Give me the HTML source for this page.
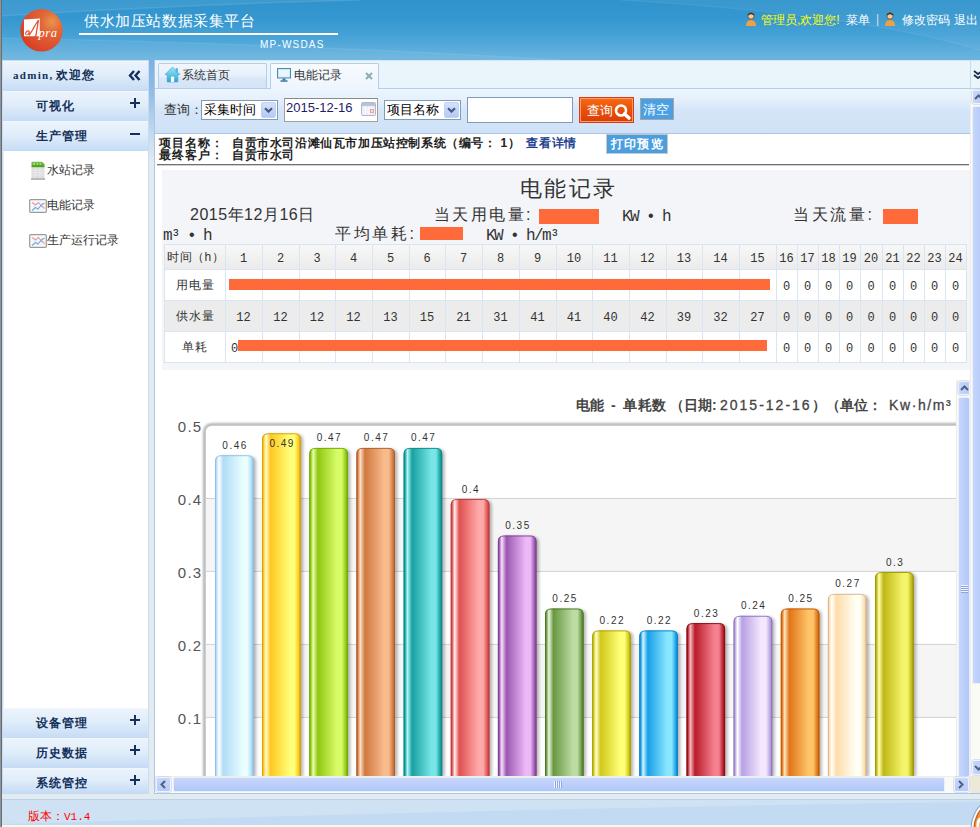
<!DOCTYPE html>
<html><head><meta charset="utf-8">
<style>
*{margin:0;padding:0;box-sizing:border-box}
html,body{width:980px;height:827px;overflow:hidden;background:#e3ebef;font-family:"Liberation Sans",sans-serif;font-size:12px;color:#333}
.a{position:absolute}
#hdr{left:0;top:0;width:980px;height:60px;background:linear-gradient(180deg,#2f93cc 0%,#3597cf 30%,#45a2d6 60%,#5eaedc 85%,#6ab5df 100%);overflow:hidden}
#lb{left:0;top:0;width:2px;height:827px;background:#8a94a8;border-right:1px solid #6e6e62;z-index:50}
.sw{border-radius:50%;background:rgba(255,255,255,0.08)}
.sbh{left:3px;width:145px;height:30px;background:linear-gradient(180deg,#ebf3fc 0%,#e0edfa 45%,#c5dbf5 100%);border-top:1px solid #f2f7fd}
.sbh b{position:absolute;top:6px;font-size:12px;color:#15305a;font-weight:bold;letter-spacing:1px}
.sbh .ic{position:absolute;left:127px;top:6px}
.it{left:28px;height:16px;font-size:12px;color:#333}
.tb{background:linear-gradient(180deg,#edf5fd 0%,#e6f1fc 22%,#d4e5f8 50%,#d0e2f7 100%)}
</style></head><body>
<div id="lb" class="a"></div>
<!-- header -->
<div id="hdr" class="a">
  <svg class="a" style="left:0;top:0" width="980" height="60" viewBox="0 0 980 60">
    <path d="M0 0 H360 Q200 4 0 16 Z" fill="#fff" opacity="0.07"/>
    <path d="M0 16 Q200 4 360 0" stroke="#fff" stroke-width="1.5" fill="none" opacity="0.10"/>
    <path d="M620 0 Q860 14 980 50 V0 Z" fill="#fff" opacity="0.05"/>
    <path d="M620 0 Q860 14 980 50" stroke="#fff" stroke-width="1.5" fill="none" opacity="0.06"/>
    <path d="M0 38 Q300 44 560 60 H0 Z" fill="#fff" opacity="0.06"/>
    <path d="M0 38 Q300 44 560 60" stroke="#fff" stroke-width="1.5" fill="none" opacity="0.08"/>
  </svg>
  <!-- logo -->
  <svg class="a" style="left:19px;top:8px" width="46" height="46" viewBox="0 0 46 46">
    <defs><radialGradient id="lg" cx="0.75" cy="0.3" r="0.85"><stop offset="0" stop-color="#ea954a"/><stop offset="0.3" stop-color="#e2673a"/><stop offset="0.75" stop-color="#dc4c2a"/><stop offset="1" stop-color="#d8381c"/></radialGradient></defs>
    <circle cx="22.5" cy="22.3" r="21.2" fill="url(#lg)"/>
    <path d="M5 11.6 L20.8 10.6 L20.8 28.2 L5 28.2 Z" fill="#fff"/>
    <path d="M6.5 26.5 Q7 22 10 23 Q11 26 7.5 27 M10 27.5 L13.5 22 Q16 17 19.5 12 M19.5 12 L17 27 M14 33 L17.5 26" stroke="#e2512c" stroke-width="1.3" fill="none"/>
    <text x="19.5" y="28.5" font-family="Liberation Serif" font-style="italic" font-size="12.5" fill="#fff" letter-spacing="0.6">pra</text>
  </svg>
  <div class="a" style="left:84px;top:12px;font-size:15px;color:#fff;letter-spacing:0.6px">供水加压站数据采集平台</div>
  <div class="a" style="left:79px;top:33px;width:259px;height:2px;background:#fff"></div>
  <div class="a" style="left:260px;top:39px;font-size:10px;color:#fff;letter-spacing:1.2px">MP-WSDAS</div>
  <!-- right links -->
  <div class="a" style="left:745px;top:12px;width:12px;height:14px">
    <svg width="12" height="14" viewBox="0 0 12 14"><circle cx="6" cy="4" r="3.2" fill="#f6c89a" stroke="#5a4030" stroke-width="0.8"/><path d="M1 14 Q1 8 6 8 Q11 8 11 14Z" fill="#f0a040"/><path d="M3 3 Q6 0 9 3" stroke="#333" stroke-width="1.4" fill="none"/></svg>
  </div>
  <div class="a" style="left:761px;top:12px;font-size:12px;color:#ffff00">管理员,欢迎您!</div>
  <div class="a" style="left:846px;top:12px;font-size:12px;color:#fff">菜单</div>
  <div class="a" style="left:876px;top:12px;font-size:12px;color:#dde">|</div>
  <div class="a" style="left:884px;top:12px;width:12px;height:14px">
    <svg width="12" height="14" viewBox="0 0 12 14"><circle cx="6" cy="4" r="3.2" fill="#f6c89a" stroke="#5a4030" stroke-width="0.8"/><path d="M1 14 Q1 8 6 8 Q11 8 11 14Z" fill="#f0a040"/><path d="M3 3 Q6 0 9 3" stroke="#333" stroke-width="1.4" fill="none"/></svg>
  </div>
  <div class="a" style="left:902px;top:12px;font-size:12px;color:#fff">修改密码</div>
  <div class="a" style="left:954px;top:12px;font-size:12px;color:#fff">退出</div>
</div>

<!-- sidebar -->
<div class="a" style="left:2px;top:60px;width:147px;height:734px;background:#fff;border:1px solid #c6dbf7;border-top:1px solid #c8daf0;box-shadow:inset 1px 0 0 #e2edfa"></div>
<div class="a sbh" style="top:61px"><b style="left:10px;font-size:12px;top:5px;letter-spacing:1px"><span style="font-family:'Liberation Serif',serif;font-size:11px;letter-spacing:1.3px;margin-right:2px">admin,</span>欢迎您</b><svg class="ic" style="left:125px;top:8px" width="13" height="11" viewBox="0 0 13 11"><path d="M6 1 L2 5.5 L6 10 M11.5 1 L7.5 5.5 L11.5 10" stroke="#15305a" stroke-width="2.4" fill="none"/></svg></div>
<div class="a sbh" style="top:91px"><b style="left:33px">可视化</b><svg class="ic" width="10" height="10" viewBox="0 0 10 10"><path d="M0 5H10M5 0V10" stroke="#15305a" stroke-width="2"/></svg></div>
<div class="a sbh" style="top:121px"><b style="left:33px">生产管理</b><svg class="ic" width="10" height="10" viewBox="0 0 10 10"><path d="M0 6H10" stroke="#15305a" stroke-width="2"/></svg></div>
<!-- items -->
<svg class="a" style="left:31px;top:161px" width="14" height="19" viewBox="0 0 14 19"><defs><linearGradient id="xg" x1="0" y1="0" x2="0" y2="1"><stop offset="0" stop-color="#7cc34a"/><stop offset="1" stop-color="#3f9a12"/></linearGradient></defs><path d="M0.5 1.5 Q0.5 0.8 1.2 0.8 H11 L13.5 3 V6.5 H0.5Z" fill="url(#xg)"/><rect x="0.5" y="6.5" width="13" height="11" fill="#dcdcdc"/><path d="M0.5 9H13.5M0.5 11.5H13.5M0.5 14H13.5M4.5 6.5V17.5M9 6.5V17.5" stroke="#ececec" stroke-width="0.8"/><rect x="0" y="17.3" width="14" height="1.5" fill="#a8a8a8"/><path d="M2 3H4M5.5 3H7M8.5 3H10" stroke="#e8f4e0" stroke-width="1.2"/></svg>
<div class="a it" style="left:47px;top:162px">水站记录</div>
<svg class="a" style="left:29px;top:199px" width="18" height="14" viewBox="0 0 18 14"><rect x="0.7" y="0.7" width="16.6" height="12.6" rx="1" fill="#fafafa" stroke="#9a9a9a" stroke-width="1.2"/><path d="M2 4.5H16M2 7.5H16M2 10.5H16M5 2V12M9 2V12M13 2V12" stroke="#ececec" stroke-width="0.6"/><path d="M3 3.5 L6.5 6 L9.5 3.5 L12 6.5 L15.5 9.5" stroke="#e99aa8" stroke-width="1.1" fill="none"/><path d="M3 11.5 L6.5 8.5 L9 10 L12.5 6 L15.5 4" stroke="#5cb0ee" stroke-width="1.1" fill="none"/></svg>
<div class="a it" style="left:47px;top:197px">电能记录</div>
<svg class="a" style="left:29px;top:234px" width="18" height="14" viewBox="0 0 18 14"><rect x="0.7" y="0.7" width="16.6" height="12.6" rx="1" fill="#fafafa" stroke="#9a9a9a" stroke-width="1.2"/><path d="M2 4.5H16M2 7.5H16M2 10.5H16M5 2V12M9 2V12M13 2V12" stroke="#ececec" stroke-width="0.6"/><path d="M3 3.5 L6.5 6 L9.5 3.5 L12 6.5 L15.5 9.5" stroke="#e99aa8" stroke-width="1.1" fill="none"/><path d="M3 11.5 L6.5 8.5 L9 10 L12.5 6 L15.5 4" stroke="#5cb0ee" stroke-width="1.1" fill="none"/></svg>
<div class="a it" style="left:47px;top:232px">生产运行记录</div>

<div class="a sbh" style="top:708px"><b style="left:33px">设备管理</b><svg class="ic" width="10" height="10" viewBox="0 0 10 10"><path d="M0 5H10M5 0V10" stroke="#15305a" stroke-width="2"/></svg></div>
<div class="a sbh" style="top:738px"><b style="left:33px">历史数据</b><svg class="ic" width="10" height="10" viewBox="0 0 10 10"><path d="M0 5H10M5 0V10" stroke="#15305a" stroke-width="2"/></svg></div>
<div class="a sbh" style="top:768px;height:25px"><b style="left:33px;top:6px">系统管控</b><svg class="ic" style="top:6px" width="10" height="10" viewBox="0 0 10 10"><path d="M0 5H10M5 0V10" stroke="#15305a" stroke-width="2"/></svg></div>

<!-- splitter -->
<div class="a" style="left:149px;top:60px;width:5px;height:734px;background:linear-gradient(180deg,#7db0e0 0%,#8fbbe4 4%,#c4daee 10%,#e3ebef 14%,#e3ebef 100%)"></div>

<!-- main panel -->
<div class="a" style="left:154px;top:60px;width:826px;height:734px;background:#fff;border-left:1px solid #a9c6e8;border-bottom:1px solid #a9c6e8"></div>
<!-- tab strip -->
<div class="a" style="left:155px;top:60px;width:825px;height:29px;background:#e9f4fb;border-top:1px solid #d4e6f6;border-bottom:1px solid #b6cfec"></div>
<div class="a" style="left:158px;top:63px;width:109px;height:25px;background:linear-gradient(180deg,#f0f6fd 0%,#e6f0fb 50%,#d9e7f8 60%,#d4e3f6 100%);border:1px solid #b4cdea;border-bottom:none;border-radius:2px 2px 0 0"></div>
<svg class="a" style="left:164px;top:66px" width="17" height="17" viewBox="0 0 16 16"><defs><linearGradient id="hg" x1="0" y1="0" x2="0" y2="1"><stop offset="0" stop-color="#9ee6f4"/><stop offset="1" stop-color="#2aa6d8"/></linearGradient></defs><path d="M8 1 L15 8 L13 8 L13 15 L3 15 L3 8 L1 8 Z" fill="url(#hg)" stroke="#3fa4c8" stroke-width="0.6"/><rect x="11" y="2" width="2" height="4" fill="#4ab8dc"/><rect x="6.5" y="10" width="3" height="5" fill="#fff"/></svg>
<div class="a" style="left:182px;top:67px;font-size:12px;color:#333">系统首页</div>
<div class="a" style="left:270px;top:63px;width:109px;height:26px;background:linear-gradient(180deg,#f7fbff,#eef5fd);border:1px solid #b4cdea;border-bottom:none;border-radius:2px 2px 0 0"></div>
<svg class="a" style="left:277px;top:68px" width="14" height="14" viewBox="0 0 14 14"><rect x="0.5" y="0.5" width="13" height="9.5" fill="#cfe8f4" stroke="#4a8cb0"/><rect x="2" y="2" width="10" height="6.5" fill="#e9f6fb"/><rect x="5.5" y="10.5" width="3" height="2" fill="#3a7aa0"/><rect x="3.5" y="12.3" width="7" height="1.5" fill="#3a7aa0"/></svg>
<div class="a" style="left:294px;top:67px;font-size:12px;color:#333">电能记录</div>
<svg class="a" style="left:365px;top:72px" width="8" height="8" viewBox="0 0 8 8"><path d="M1 1L7 7M7 1L1 7" stroke="#8cadb2" stroke-width="2"/></svg>
<div class="a" style="left:970px;top:61px;width:1px;height:27px;background:#c6daf2"></div>
<svg class="a" style="left:973px;top:69px" width="8" height="12" viewBox="0 0 8 12"><path d="M1 2 L5 5 L9 2 M1 6 L5 9 L9 6" stroke="#1a2c4c" stroke-width="1.8" fill="none"/></svg>
<!-- toolbar -->
<div class="a tb" style="left:155px;top:89px;width:816px;height:45px;border-bottom:1px solid #a9c6e8"></div>
<div class="a" style="left:164px;top:101px;font-size:13px;color:#333">查询：</div>
<div class="a" style="left:201px;top:100px;width:77px;height:20px;background:#fff;border:1px solid #7f9db9"></div>
<div class="a" style="left:204px;top:101px;font-size:13px;color:#000">采集时间</div>
<div class="a" style="left:261px;top:102px;width:15px;height:16px;border-radius:2px;background:linear-gradient(180deg,#d5e1fb,#b3c9f4);border:1px solid #c4d2f0"></div>
<svg class="a" style="left:264px;top:107px" width="9" height="6" viewBox="0 0 9 6"><path d="M1 1.2 L4.5 4.6 L8 1.2" stroke="#46597e" stroke-width="2.2" fill="none"/></svg>
<div class="a" style="left:284px;top:98px;width:94px;height:24px;background:#fff;border:1px solid #a0a0a0;border-top-color:#8a8a8a"></div>
<div class="a" style="left:286px;top:100px;font-size:13px;color:#1c1c6a">2015-12-16</div>
<svg class="a" style="left:361px;top:102px" width="15" height="14" viewBox="0 0 15 14"><rect x="0.5" y="0.5" width="14" height="13" rx="1" fill="#e8ecf4" stroke="#b0b8c8"/><rect x="1" y="1" width="13" height="3" fill="#b4c4dc"/><path d="M1 7 H14 M1 10 H14 M4.5 4 V13 M8 4 V13 M11 4 V13" stroke="#fafcff" stroke-width="0.9"/><rect x="9" y="7" width="4" height="4" fill="#f0a090"/><rect x="10.2" y="8.2" width="1.6" height="1.6" fill="#fff"/></svg>
<div class="a" style="left:384px;top:100px;width:77px;height:20px;background:#fff;border:1px solid #7f9db9"></div>
<div class="a" style="left:387px;top:101px;font-size:13px;color:#000">项目名称</div>
<div class="a" style="left:444px;top:102px;width:15px;height:16px;border-radius:2px;background:linear-gradient(180deg,#d5e1fb,#b3c9f4);border:1px solid #c4d2f0"></div>
<svg class="a" style="left:447px;top:107px" width="9" height="6" viewBox="0 0 9 6"><path d="M1 1.2 L4.5 4.6 L8 1.2" stroke="#46597e" stroke-width="2.2" fill="none"/></svg>
<div class="a" style="left:467px;top:97px;width:106px;height:26px;background:#fff;border:1px solid #7f9db9"></div>
<div class="a" style="left:579px;top:97px;width:55px;height:26px;background:linear-gradient(180deg,#f86a12,#e8500a 50%,#dc3c08);border:1px solid #d83a1a;box-shadow:inset 0 0 0 1px #f7a066"></div>
<div class="a" style="left:587px;top:102px;font-size:13px;color:#fff">查询</div>
<svg class="a" style="left:614px;top:104px" width="18" height="16" viewBox="0 0 18 16"><circle cx="7" cy="6.5" r="5" stroke="#fff" stroke-width="2.6" fill="none"/><path d="M10.5 10 L15 14" stroke="#fff" stroke-width="3.6" stroke-linecap="round"/></svg>
<div class="a" style="left:640px;top:98px;width:34px;height:22px;background:#4aa0e2;border:1px solid #a4a4a4"></div>
<div class="a" style="left:643px;top:101px;font-size:13px;color:#fff">清空</div>
<!-- info -->
<div class="a" style="left:159px;top:137px;font-size:12px;font-weight:bold;color:#222;line-height:12px;letter-spacing:1px">项目名称：<br>最终客户：</div>
<div class="a" style="left:232px;top:137px;font-size:12px;font-weight:bold;color:#222;line-height:12px;letter-spacing:0.6px;white-space:nowrap">自贡市水司沿滩仙瓦市加压站控制系统（编号： 1）<span style="color:#1d3f8f;margin-left:6px">查看详情</span><br>自贡市水司</div>
<div class="a" style="left:606px;top:134px;width:62px;height:20px;background:#4a9fe0;border:1px solid #c8c8c8"></div>
<div class="a" style="left:611px;top:136px;font-size:12px;font-weight:bold;color:#fff;letter-spacing:1.2px">打印预览</div>
<div class="a" style="left:157px;top:164px;width:812px;height:1px;background:#707070"></div>
<div class="a" style="left:157px;top:165px;width:812px;height:1px;background:#d0d0d0"></div>
<!-- report panel -->
<div class="a" style="left:162px;top:170px;width:809px;height:200px;background:#f4f5f8"></div>
<div class="a" style="left:520px;top:174px;font-size:22px;color:#333;letter-spacing:2.3px">电能记录</div>
<div class="a" style="left:190px;top:205px;font-size:16px;color:#333;letter-spacing:0.5px">2015年12月16日</div>
<div class="a" style="left:434px;top:205px;font-size:16px;color:#333;letter-spacing:2.4px">当天用电量:</div>
<div class="a" style="left:539px;top:209px;width:60px;height:15px;background:#fe6a3a"></div>
<div class="a" style="left:622px;top:208px;font-size:16px;color:#333;font-family:'Liberation Mono',monospace;letter-spacing:-1.6px">KW • h</div>
<div class="a" style="left:793px;top:205px;font-size:16px;color:#333;letter-spacing:2.6px">当天流量:</div>
<div class="a" style="left:883px;top:209px;width:35px;height:15px;background:#fe6a3a"></div>
<div class="a" style="left:163px;top:227px;font-size:16px;color:#333;font-family:'Liberation Mono',monospace;letter-spacing:-1.6px">m³ • h</div>
<div class="a" style="left:335px;top:224px;font-size:16px;color:#333;letter-spacing:2.6px">平均单耗:</div>
<div class="a" style="left:420px;top:227px;width:43px;height:13px;background:#fe6a3a"></div>
<div class="a" style="left:486px;top:227px;font-size:16px;color:#333;font-family:'Liberation Mono',monospace;letter-spacing:-1.6px">KW • h/m³</div>
<div class="a" style="left:164px;top:244px;width:803px;height:25px;background:linear-gradient(180deg,#f8f8f8,#ebebeb)"></div>
<div class="a" style="left:164px;top:269px;width:803px;height:31px;background:#fff"></div>
<div class="a" style="left:164px;top:300px;width:803px;height:31px;background:#ececec"></div>
<div class="a" style="left:164px;top:331px;width:803px;height:31px;background:#fff"></div>
<div class="a" style="left:164px;top:244px;width:803px;height:1px;background:#d9e5f2"></div>
<div class="a" style="left:164px;top:269px;width:803px;height:1px;background:#d9e5f2"></div>
<div class="a" style="left:164px;top:300px;width:803px;height:1px;background:#d9e5f2"></div>
<div class="a" style="left:164px;top:331px;width:803px;height:1px;background:#d9e5f2"></div>
<div class="a" style="left:164px;top:362px;width:803px;height:1px;background:#d9e5f2"></div>
<div class="a" style="left:164px;top:244px;width:1px;height:119px;background:#d9e5f2"></div>
<div class="a" style="left:225px;top:244px;width:1px;height:119px;background:#d9e5f2"></div>
<div class="a" style="left:262px;top:244px;width:1px;height:119px;background:#d9e5f2"></div>
<div class="a" style="left:299px;top:244px;width:1px;height:119px;background:#d9e5f2"></div>
<div class="a" style="left:335px;top:244px;width:1px;height:119px;background:#d9e5f2"></div>
<div class="a" style="left:372px;top:244px;width:1px;height:119px;background:#d9e5f2"></div>
<div class="a" style="left:409px;top:244px;width:1px;height:119px;background:#d9e5f2"></div>
<div class="a" style="left:445px;top:244px;width:1px;height:119px;background:#d9e5f2"></div>
<div class="a" style="left:482px;top:244px;width:1px;height:119px;background:#d9e5f2"></div>
<div class="a" style="left:519px;top:244px;width:1px;height:119px;background:#d9e5f2"></div>
<div class="a" style="left:556px;top:244px;width:1px;height:119px;background:#d9e5f2"></div>
<div class="a" style="left:592px;top:244px;width:1px;height:119px;background:#d9e5f2"></div>
<div class="a" style="left:629px;top:244px;width:1px;height:119px;background:#d9e5f2"></div>
<div class="a" style="left:666px;top:244px;width:1px;height:119px;background:#d9e5f2"></div>
<div class="a" style="left:702px;top:244px;width:1px;height:119px;background:#d9e5f2"></div>
<div class="a" style="left:739px;top:244px;width:1px;height:119px;background:#d9e5f2"></div>
<div class="a" style="left:776px;top:244px;width:1px;height:119px;background:#d9e5f2"></div>
<div class="a" style="left:797px;top:244px;width:1px;height:119px;background:#d9e5f2"></div>
<div class="a" style="left:818px;top:244px;width:1px;height:119px;background:#d9e5f2"></div>
<div class="a" style="left:839px;top:244px;width:1px;height:119px;background:#d9e5f2"></div>
<div class="a" style="left:860px;top:244px;width:1px;height:119px;background:#d9e5f2"></div>
<div class="a" style="left:882px;top:244px;width:1px;height:119px;background:#d9e5f2"></div>
<div class="a" style="left:903px;top:244px;width:1px;height:119px;background:#d9e5f2"></div>
<div class="a" style="left:924px;top:244px;width:1px;height:119px;background:#d9e5f2"></div>
<div class="a" style="left:945px;top:244px;width:1px;height:119px;background:#d9e5f2"></div>
<div class="a" style="left:966px;top:244px;width:1px;height:119px;background:#d9e5f2"></div>
<div class="a" style="left:164px;top:244px;width:61px;height:25px;line-height:25px;text-align:left;padding-left:3px;padding-top:1px;font-size:12px;color:#333;letter-spacing:0.5px">时间（h）</div>
<div class="a" style="left:164px;top:269px;width:61px;height:31px;line-height:31px;text-align:center;font-size:12px;color:#333;letter-spacing:1px;padding-left:1px;padding-top:1px">用电量</div>
<div class="a" style="left:164px;top:300px;width:61px;height:31px;line-height:31px;text-align:center;font-size:12px;color:#333;letter-spacing:1px;padding-left:1px;padding-top:1px">供水量</div>
<div class="a" style="left:164px;top:331px;width:61px;height:31px;line-height:31px;text-align:center;font-size:12px;color:#333;letter-spacing:1px;padding-left:1px;padding-top:1px">单耗</div>
<div class="a" style="left:225px;top:244px;width:37px;height:25px;line-height:25px;text-align:center;font-size:12px;color:#333;font-family:'Liberation Mono',monospace;padding-top:3px">1</div>
<div class="a" style="left:262px;top:244px;width:37px;height:25px;line-height:25px;text-align:center;font-size:12px;color:#333;font-family:'Liberation Mono',monospace;padding-top:3px">2</div>
<div class="a" style="left:299px;top:244px;width:36px;height:25px;line-height:25px;text-align:center;font-size:12px;color:#333;font-family:'Liberation Mono',monospace;padding-top:3px">3</div>
<div class="a" style="left:335px;top:244px;width:37px;height:25px;line-height:25px;text-align:center;font-size:12px;color:#333;font-family:'Liberation Mono',monospace;padding-top:3px">4</div>
<div class="a" style="left:372px;top:244px;width:37px;height:25px;line-height:25px;text-align:center;font-size:12px;color:#333;font-family:'Liberation Mono',monospace;padding-top:3px">5</div>
<div class="a" style="left:409px;top:244px;width:36px;height:25px;line-height:25px;text-align:center;font-size:12px;color:#333;font-family:'Liberation Mono',monospace;padding-top:3px">6</div>
<div class="a" style="left:445px;top:244px;width:37px;height:25px;line-height:25px;text-align:center;font-size:12px;color:#333;font-family:'Liberation Mono',monospace;padding-top:3px">7</div>
<div class="a" style="left:482px;top:244px;width:37px;height:25px;line-height:25px;text-align:center;font-size:12px;color:#333;font-family:'Liberation Mono',monospace;padding-top:3px">8</div>
<div class="a" style="left:519px;top:244px;width:37px;height:25px;line-height:25px;text-align:center;font-size:12px;color:#333;font-family:'Liberation Mono',monospace;padding-top:3px">9</div>
<div class="a" style="left:556px;top:244px;width:36px;height:25px;line-height:25px;text-align:center;font-size:12px;color:#333;font-family:'Liberation Mono',monospace;padding-top:3px">10</div>
<div class="a" style="left:592px;top:244px;width:37px;height:25px;line-height:25px;text-align:center;font-size:12px;color:#333;font-family:'Liberation Mono',monospace;padding-top:3px">11</div>
<div class="a" style="left:629px;top:244px;width:37px;height:25px;line-height:25px;text-align:center;font-size:12px;color:#333;font-family:'Liberation Mono',monospace;padding-top:3px">12</div>
<div class="a" style="left:666px;top:244px;width:36px;height:25px;line-height:25px;text-align:center;font-size:12px;color:#333;font-family:'Liberation Mono',monospace;padding-top:3px">13</div>
<div class="a" style="left:702px;top:244px;width:37px;height:25px;line-height:25px;text-align:center;font-size:12px;color:#333;font-family:'Liberation Mono',monospace;padding-top:3px">14</div>
<div class="a" style="left:739px;top:244px;width:37px;height:25px;line-height:25px;text-align:center;font-size:12px;color:#333;font-family:'Liberation Mono',monospace;padding-top:3px">15</div>
<div class="a" style="left:776px;top:244px;width:21px;height:25px;line-height:25px;text-align:center;font-size:12px;color:#333;font-family:'Liberation Mono',monospace;padding-top:3px">16</div>
<div class="a" style="left:797px;top:244px;width:21px;height:25px;line-height:25px;text-align:center;font-size:12px;color:#333;font-family:'Liberation Mono',monospace;padding-top:3px">17</div>
<div class="a" style="left:818px;top:244px;width:21px;height:25px;line-height:25px;text-align:center;font-size:12px;color:#333;font-family:'Liberation Mono',monospace;padding-top:3px">18</div>
<div class="a" style="left:839px;top:244px;width:21px;height:25px;line-height:25px;text-align:center;font-size:12px;color:#333;font-family:'Liberation Mono',monospace;padding-top:3px">19</div>
<div class="a" style="left:860px;top:244px;width:22px;height:25px;line-height:25px;text-align:center;font-size:12px;color:#333;font-family:'Liberation Mono',monospace;padding-top:3px">20</div>
<div class="a" style="left:882px;top:244px;width:21px;height:25px;line-height:25px;text-align:center;font-size:12px;color:#333;font-family:'Liberation Mono',monospace;padding-top:3px">21</div>
<div class="a" style="left:903px;top:244px;width:21px;height:25px;line-height:25px;text-align:center;font-size:12px;color:#333;font-family:'Liberation Mono',monospace;padding-top:3px">22</div>
<div class="a" style="left:924px;top:244px;width:21px;height:25px;line-height:25px;text-align:center;font-size:12px;color:#333;font-family:'Liberation Mono',monospace;padding-top:3px">23</div>
<div class="a" style="left:945px;top:244px;width:21px;height:25px;line-height:25px;text-align:center;font-size:12px;color:#333;font-family:'Liberation Mono',monospace;padding-top:3px">24</div>
<div class="a" style="left:225px;top:300px;width:37px;height:31px;line-height:31px;text-align:center;font-size:12px;color:#333;font-family:'Liberation Mono',monospace;padding-top:3px">12</div>
<div class="a" style="left:262px;top:300px;width:37px;height:31px;line-height:31px;text-align:center;font-size:12px;color:#333;font-family:'Liberation Mono',monospace;padding-top:3px">12</div>
<div class="a" style="left:299px;top:300px;width:36px;height:31px;line-height:31px;text-align:center;font-size:12px;color:#333;font-family:'Liberation Mono',monospace;padding-top:3px">12</div>
<div class="a" style="left:335px;top:300px;width:37px;height:31px;line-height:31px;text-align:center;font-size:12px;color:#333;font-family:'Liberation Mono',monospace;padding-top:3px">12</div>
<div class="a" style="left:372px;top:300px;width:37px;height:31px;line-height:31px;text-align:center;font-size:12px;color:#333;font-family:'Liberation Mono',monospace;padding-top:3px">13</div>
<div class="a" style="left:409px;top:300px;width:36px;height:31px;line-height:31px;text-align:center;font-size:12px;color:#333;font-family:'Liberation Mono',monospace;padding-top:3px">15</div>
<div class="a" style="left:445px;top:300px;width:37px;height:31px;line-height:31px;text-align:center;font-size:12px;color:#333;font-family:'Liberation Mono',monospace;padding-top:3px">21</div>
<div class="a" style="left:482px;top:300px;width:37px;height:31px;line-height:31px;text-align:center;font-size:12px;color:#333;font-family:'Liberation Mono',monospace;padding-top:3px">31</div>
<div class="a" style="left:519px;top:300px;width:37px;height:31px;line-height:31px;text-align:center;font-size:12px;color:#333;font-family:'Liberation Mono',monospace;padding-top:3px">41</div>
<div class="a" style="left:556px;top:300px;width:36px;height:31px;line-height:31px;text-align:center;font-size:12px;color:#333;font-family:'Liberation Mono',monospace;padding-top:3px">41</div>
<div class="a" style="left:592px;top:300px;width:37px;height:31px;line-height:31px;text-align:center;font-size:12px;color:#333;font-family:'Liberation Mono',monospace;padding-top:3px">40</div>
<div class="a" style="left:629px;top:300px;width:37px;height:31px;line-height:31px;text-align:center;font-size:12px;color:#333;font-family:'Liberation Mono',monospace;padding-top:3px">42</div>
<div class="a" style="left:666px;top:300px;width:36px;height:31px;line-height:31px;text-align:center;font-size:12px;color:#333;font-family:'Liberation Mono',monospace;padding-top:3px">39</div>
<div class="a" style="left:702px;top:300px;width:37px;height:31px;line-height:31px;text-align:center;font-size:12px;color:#333;font-family:'Liberation Mono',monospace;padding-top:3px">32</div>
<div class="a" style="left:739px;top:300px;width:37px;height:31px;line-height:31px;text-align:center;font-size:12px;color:#333;font-family:'Liberation Mono',monospace;padding-top:3px">27</div>
<div class="a" style="left:776px;top:300px;width:21px;height:31px;line-height:31px;text-align:center;font-size:12px;color:#333;font-family:'Liberation Mono',monospace;padding-top:3px">0</div>
<div class="a" style="left:776px;top:269px;width:21px;height:31px;line-height:31px;text-align:center;font-size:12px;color:#333;font-family:'Liberation Mono',monospace;padding-top:3px">0</div>
<div class="a" style="left:776px;top:331px;width:21px;height:31px;line-height:31px;text-align:center;font-size:12px;color:#333;font-family:'Liberation Mono',monospace;padding-top:3px">0</div>
<div class="a" style="left:797px;top:300px;width:21px;height:31px;line-height:31px;text-align:center;font-size:12px;color:#333;font-family:'Liberation Mono',monospace;padding-top:3px">0</div>
<div class="a" style="left:797px;top:269px;width:21px;height:31px;line-height:31px;text-align:center;font-size:12px;color:#333;font-family:'Liberation Mono',monospace;padding-top:3px">0</div>
<div class="a" style="left:797px;top:331px;width:21px;height:31px;line-height:31px;text-align:center;font-size:12px;color:#333;font-family:'Liberation Mono',monospace;padding-top:3px">0</div>
<div class="a" style="left:818px;top:300px;width:21px;height:31px;line-height:31px;text-align:center;font-size:12px;color:#333;font-family:'Liberation Mono',monospace;padding-top:3px">0</div>
<div class="a" style="left:818px;top:269px;width:21px;height:31px;line-height:31px;text-align:center;font-size:12px;color:#333;font-family:'Liberation Mono',monospace;padding-top:3px">0</div>
<div class="a" style="left:818px;top:331px;width:21px;height:31px;line-height:31px;text-align:center;font-size:12px;color:#333;font-family:'Liberation Mono',monospace;padding-top:3px">0</div>
<div class="a" style="left:839px;top:300px;width:21px;height:31px;line-height:31px;text-align:center;font-size:12px;color:#333;font-family:'Liberation Mono',monospace;padding-top:3px">0</div>
<div class="a" style="left:839px;top:269px;width:21px;height:31px;line-height:31px;text-align:center;font-size:12px;color:#333;font-family:'Liberation Mono',monospace;padding-top:3px">0</div>
<div class="a" style="left:839px;top:331px;width:21px;height:31px;line-height:31px;text-align:center;font-size:12px;color:#333;font-family:'Liberation Mono',monospace;padding-top:3px">0</div>
<div class="a" style="left:860px;top:300px;width:22px;height:31px;line-height:31px;text-align:center;font-size:12px;color:#333;font-family:'Liberation Mono',monospace;padding-top:3px">0</div>
<div class="a" style="left:860px;top:269px;width:22px;height:31px;line-height:31px;text-align:center;font-size:12px;color:#333;font-family:'Liberation Mono',monospace;padding-top:3px">0</div>
<div class="a" style="left:860px;top:331px;width:22px;height:31px;line-height:31px;text-align:center;font-size:12px;color:#333;font-family:'Liberation Mono',monospace;padding-top:3px">0</div>
<div class="a" style="left:882px;top:300px;width:21px;height:31px;line-height:31px;text-align:center;font-size:12px;color:#333;font-family:'Liberation Mono',monospace;padding-top:3px">0</div>
<div class="a" style="left:882px;top:269px;width:21px;height:31px;line-height:31px;text-align:center;font-size:12px;color:#333;font-family:'Liberation Mono',monospace;padding-top:3px">0</div>
<div class="a" style="left:882px;top:331px;width:21px;height:31px;line-height:31px;text-align:center;font-size:12px;color:#333;font-family:'Liberation Mono',monospace;padding-top:3px">0</div>
<div class="a" style="left:903px;top:300px;width:21px;height:31px;line-height:31px;text-align:center;font-size:12px;color:#333;font-family:'Liberation Mono',monospace;padding-top:3px">0</div>
<div class="a" style="left:903px;top:269px;width:21px;height:31px;line-height:31px;text-align:center;font-size:12px;color:#333;font-family:'Liberation Mono',monospace;padding-top:3px">0</div>
<div class="a" style="left:903px;top:331px;width:21px;height:31px;line-height:31px;text-align:center;font-size:12px;color:#333;font-family:'Liberation Mono',monospace;padding-top:3px">0</div>
<div class="a" style="left:924px;top:300px;width:21px;height:31px;line-height:31px;text-align:center;font-size:12px;color:#333;font-family:'Liberation Mono',monospace;padding-top:3px">0</div>
<div class="a" style="left:924px;top:269px;width:21px;height:31px;line-height:31px;text-align:center;font-size:12px;color:#333;font-family:'Liberation Mono',monospace;padding-top:3px">0</div>
<div class="a" style="left:924px;top:331px;width:21px;height:31px;line-height:31px;text-align:center;font-size:12px;color:#333;font-family:'Liberation Mono',monospace;padding-top:3px">0</div>
<div class="a" style="left:945px;top:300px;width:21px;height:31px;line-height:31px;text-align:center;font-size:12px;color:#333;font-family:'Liberation Mono',monospace;padding-top:3px">0</div>
<div class="a" style="left:945px;top:269px;width:21px;height:31px;line-height:31px;text-align:center;font-size:12px;color:#333;font-family:'Liberation Mono',monospace;padding-top:3px">0</div>
<div class="a" style="left:945px;top:331px;width:21px;height:31px;line-height:31px;text-align:center;font-size:12px;color:#333;font-family:'Liberation Mono',monospace;padding-top:3px">0</div>
<div class="a" style="left:229px;top:279px;width:541px;height:11px;background:#fe6a3a"></div>
<div class="a" style="left:231px;top:343px;font-size:12px;line-height:12px;color:#333;font-family:'Liberation Mono',monospace">0</div>
<div class="a" style="left:238px;top:340px;width:529px;height:11px;background:#fe6a3a"></div>
<!-- chart -->
<svg class="a" style="left:155px;top:370px" width="815" height="406" viewBox="0 0 815 406">
<defs>
<linearGradient id="b0" x1="0" y1="0" x2="1" y2="0"><stop offset="0" stop-color="#8cc0e8"/><stop offset="0.035" stop-color="#b0dcf6"/><stop offset="0.1" stop-color="#ffffff"/><stop offset="0.22" stop-color="#b0dcf6"/><stop offset="0.72" stop-color="#e8feff"/><stop offset="0.84" stop-color="#e8feff"/><stop offset="0.95" stop-color="#b0dcf6"/><stop offset="1" stop-color="#8cc0e8"/></linearGradient>
<linearGradient id="b1" x1="0" y1="0" x2="1" y2="0"><stop offset="0" stop-color="#d4a000"/><stop offset="0.035" stop-color="#ffc820"/><stop offset="0.1" stop-color="#fffbd0"/><stop offset="0.22" stop-color="#ffc820"/><stop offset="0.72" stop-color="#ffff78"/><stop offset="0.84" stop-color="#ffff78"/><stop offset="0.95" stop-color="#ffc820"/><stop offset="1" stop-color="#d4a000"/></linearGradient>
<linearGradient id="b2" x1="0" y1="0" x2="1" y2="0"><stop offset="0" stop-color="#70a800"/><stop offset="0.035" stop-color="#90c810"/><stop offset="0.1" stop-color="#e8ffb0"/><stop offset="0.22" stop-color="#90c810"/><stop offset="0.72" stop-color="#d8fc68"/><stop offset="0.84" stop-color="#d8fc68"/><stop offset="0.95" stop-color="#90c810"/><stop offset="1" stop-color="#70a800"/></linearGradient>
<linearGradient id="b3" x1="0" y1="0" x2="1" y2="0"><stop offset="0" stop-color="#b05c2a"/><stop offset="0.035" stop-color="#d07840"/><stop offset="0.1" stop-color="#ffe0c8"/><stop offset="0.22" stop-color="#d07840"/><stop offset="0.72" stop-color="#f8bc8c"/><stop offset="0.84" stop-color="#f8bc8c"/><stop offset="0.95" stop-color="#d07840"/><stop offset="1" stop-color="#b05c2a"/></linearGradient>
<linearGradient id="b4" x1="0" y1="0" x2="1" y2="0"><stop offset="0" stop-color="#0a8888"/><stop offset="0.035" stop-color="#18a0a0"/><stop offset="0.1" stop-color="#b0f8f8"/><stop offset="0.22" stop-color="#18a0a0"/><stop offset="0.72" stop-color="#78e6e6"/><stop offset="0.84" stop-color="#78e6e6"/><stop offset="0.95" stop-color="#18a0a0"/><stop offset="1" stop-color="#0a8888"/></linearGradient>
<linearGradient id="b5" x1="0" y1="0" x2="1" y2="0"><stop offset="0" stop-color="#c03838"/><stop offset="0.035" stop-color="#e05050"/><stop offset="0.1" stop-color="#fff0f0"/><stop offset="0.22" stop-color="#e05050"/><stop offset="0.72" stop-color="#ffaaaa"/><stop offset="0.84" stop-color="#ffaaaa"/><stop offset="0.95" stop-color="#e05050"/><stop offset="1" stop-color="#c03838"/></linearGradient>
<linearGradient id="b6" x1="0" y1="0" x2="1" y2="0"><stop offset="0" stop-color="#804090"/><stop offset="0.035" stop-color="#9a58b0"/><stop offset="0.1" stop-color="#fae0ff"/><stop offset="0.22" stop-color="#9a58b0"/><stop offset="0.72" stop-color="#ecb8f8"/><stop offset="0.84" stop-color="#ecb8f8"/><stop offset="0.95" stop-color="#9a58b0"/><stop offset="1" stop-color="#804090"/></linearGradient>
<linearGradient id="b7" x1="0" y1="0" x2="1" y2="0"><stop offset="0" stop-color="#4a7828"/><stop offset="0.035" stop-color="#689840"/><stop offset="0.1" stop-color="#eaf6e0"/><stop offset="0.22" stop-color="#689840"/><stop offset="0.72" stop-color="#bcdca4"/><stop offset="0.84" stop-color="#bcdca4"/><stop offset="0.95" stop-color="#689840"/><stop offset="1" stop-color="#4a7828"/></linearGradient>
<linearGradient id="b8" x1="0" y1="0" x2="1" y2="0"><stop offset="0" stop-color="#aaa000"/><stop offset="0.035" stop-color="#d0c818"/><stop offset="0.1" stop-color="#ffffd0"/><stop offset="0.22" stop-color="#d0c818"/><stop offset="0.72" stop-color="#ffff78"/><stop offset="0.84" stop-color="#ffff78"/><stop offset="0.95" stop-color="#d0c818"/><stop offset="1" stop-color="#aaa000"/></linearGradient>
<linearGradient id="b9" x1="0" y1="0" x2="1" y2="0"><stop offset="0" stop-color="#0880c8"/><stop offset="0.035" stop-color="#18a0e8"/><stop offset="0.1" stop-color="#d0f6ff"/><stop offset="0.22" stop-color="#18a0e8"/><stop offset="0.72" stop-color="#88e6ff"/><stop offset="0.84" stop-color="#88e6ff"/><stop offset="0.95" stop-color="#18a0e8"/><stop offset="1" stop-color="#0880c8"/></linearGradient>
<linearGradient id="b10" x1="0" y1="0" x2="1" y2="0"><stop offset="0" stop-color="#880c1a"/><stop offset="0.035" stop-color="#b81c2a"/><stop offset="0.1" stop-color="#f8b8c0"/><stop offset="0.22" stop-color="#b81c2a"/><stop offset="0.72" stop-color="#f48090"/><stop offset="0.84" stop-color="#f48090"/><stop offset="0.95" stop-color="#b81c2a"/><stop offset="1" stop-color="#880c1a"/></linearGradient>
<linearGradient id="b11" x1="0" y1="0" x2="1" y2="0"><stop offset="0" stop-color="#8a78b8"/><stop offset="0.035" stop-color="#b8a0e4"/><stop offset="0.1" stop-color="#ffffff"/><stop offset="0.22" stop-color="#b8a0e4"/><stop offset="0.72" stop-color="#f4e8ff"/><stop offset="0.84" stop-color="#f4e8ff"/><stop offset="0.95" stop-color="#b8a0e4"/><stop offset="1" stop-color="#8a78b8"/></linearGradient>
<linearGradient id="b12" x1="0" y1="0" x2="1" y2="0"><stop offset="0" stop-color="#c45800"/><stop offset="0.035" stop-color="#e07418"/><stop offset="0.1" stop-color="#ffe8c0"/><stop offset="0.22" stop-color="#e07418"/><stop offset="0.72" stop-color="#ffc468"/><stop offset="0.84" stop-color="#ffc468"/><stop offset="0.95" stop-color="#e07418"/><stop offset="1" stop-color="#c45800"/></linearGradient>
<linearGradient id="b13" x1="0" y1="0" x2="1" y2="0"><stop offset="0" stop-color="#d8b890"/><stop offset="0.035" stop-color="#ffdcaa"/><stop offset="0.1" stop-color="#ffffff"/><stop offset="0.22" stop-color="#ffdcaa"/><stop offset="0.72" stop-color="#fffff4"/><stop offset="0.84" stop-color="#fffff4"/><stop offset="0.95" stop-color="#ffdcaa"/><stop offset="1" stop-color="#d8b890"/></linearGradient>
<linearGradient id="b14" x1="0" y1="0" x2="1" y2="0"><stop offset="0" stop-color="#a09800"/><stop offset="0.035" stop-color="#c0b818"/><stop offset="0.1" stop-color="#ffffb0"/><stop offset="0.22" stop-color="#c0b818"/><stop offset="0.72" stop-color="#f4f468"/><stop offset="0.84" stop-color="#f4f468"/><stop offset="0.95" stop-color="#c0b818"/><stop offset="1" stop-color="#a09800"/></linearGradient>
<filter id="sh" x="-20%" y="-5%" width="150%" height="120%"><feGaussianBlur stdDeviation="1.5"/></filter>
<filter id="ps" x="-5%" y="-5%" width="110%" height="110%"><feGaussianBlur stdDeviation="0.9"/></filter>
</defs>
<path d="M49.5 420 V63.0 Q49.5 54.5 58.0 54.5 H830" fill="none" stroke="#a8a8a8" stroke-width="2.6" filter="url(#ps)"/>
<path d="M51.0 406 V62.0 Q51.0 56.0 57.0 56.0 H815 V406 Z" fill="#fff"/>
<rect x="51.0" y="128.4" width="764.0" height="73.0" fill="#f5f5f5"/>
<rect x="51.0" y="274.4" width="764.0" height="73.0" fill="#f5f5f5"/>
<rect x="51.0" y="127.9" width="764.0" height="1" fill="#d2d2d2"/>
<rect x="51.0" y="200.9" width="764.0" height="1" fill="#d2d2d2"/>
<rect x="51.0" y="273.9" width="764.0" height="1" fill="#d2d2d2"/>
<rect x="51.0" y="346.9" width="764.0" height="1" fill="#d2d2d2"/>
<text x="47.5" y="62.4" text-anchor="end" font-family="Liberation Sans" font-size="15" letter-spacing="1.3" fill="#555">0.5</text>
<text x="47.5" y="135.4" text-anchor="end" font-family="Liberation Sans" font-size="15" letter-spacing="1.3" fill="#555">0.4</text>
<text x="47.5" y="208.4" text-anchor="end" font-family="Liberation Sans" font-size="15" letter-spacing="1.3" fill="#555">0.3</text>
<text x="47.5" y="281.4" text-anchor="end" font-family="Liberation Sans" font-size="15" letter-spacing="1.3" fill="#555">0.2</text>
<text x="47.5" y="354.4" text-anchor="end" font-family="Liberation Sans" font-size="15" letter-spacing="1.3" fill="#555">0.1</text>
<path d="M60.0 406 V91.2 Q60.0 85.2 66.0 85.2 H92.6 Q98.6 85.2 98.6 91.2 V406 Z" fill="#000" opacity="0.28" filter="url(#sh)" transform="translate(2.5,1)"/>
<path d="M60.0 406 V91.2 Q60.0 85.2 66.0 85.2 H92.6 Q98.6 85.2 98.6 91.2 V406 Z" fill="url(#b0)"/>
<path d="M60.5 406 V91.2 Q60.5 85.7 66.0 85.7 H92.6 Q98.1 85.7 98.1 91.2 V406" fill="none" stroke="#8cc0e8" stroke-width="1" opacity="0.9"/>
<text x="80.1" y="78.7" text-anchor="middle" font-family="Liberation Sans" font-size="10" letter-spacing="1.5" fill="#333">0.46</text>
<path d="M107.1 406 V69.3 Q107.1 63.3 113.1 63.3 H139.7 Q145.7 63.3 145.7 69.3 V406 Z" fill="#000" opacity="0.28" filter="url(#sh)" transform="translate(2.5,1)"/>
<path d="M107.1 406 V69.3 Q107.1 63.3 113.1 63.3 H139.7 Q145.7 63.3 145.7 69.3 V406 Z" fill="url(#b1)"/>
<path d="M107.6 406 V69.3 Q107.6 63.8 113.1 63.8 H139.7 Q145.2 63.8 145.2 69.3 V406" fill="none" stroke="#d4a000" stroke-width="1" opacity="0.9"/>
<text x="127.2" y="77.3" text-anchor="middle" font-family="Liberation Sans" font-size="10" letter-spacing="1.5" fill="#333">0.49</text>
<path d="M154.3 406 V83.9 Q154.3 77.9 160.3 77.9 H186.9 Q192.9 77.9 192.9 83.9 V406 Z" fill="#000" opacity="0.28" filter="url(#sh)" transform="translate(2.5,1)"/>
<path d="M154.3 406 V83.9 Q154.3 77.9 160.3 77.9 H186.9 Q192.9 77.9 192.9 83.9 V406 Z" fill="url(#b2)"/>
<path d="M154.8 406 V83.9 Q154.8 78.4 160.3 78.4 H186.9 Q192.4 78.4 192.4 83.9 V406" fill="none" stroke="#70a800" stroke-width="1" opacity="0.9"/>
<text x="174.4" y="71.4" text-anchor="middle" font-family="Liberation Sans" font-size="10" letter-spacing="1.5" fill="#333">0.47</text>
<path d="M201.4 406 V83.9 Q201.4 77.9 207.4 77.9 H234.0 Q240.0 77.9 240.0 83.9 V406 Z" fill="#000" opacity="0.28" filter="url(#sh)" transform="translate(2.5,1)"/>
<path d="M201.4 406 V83.9 Q201.4 77.9 207.4 77.9 H234.0 Q240.0 77.9 240.0 83.9 V406 Z" fill="url(#b3)"/>
<path d="M201.9 406 V83.9 Q201.9 78.4 207.4 78.4 H234.0 Q239.5 78.4 239.5 83.9 V406" fill="none" stroke="#b05c2a" stroke-width="1" opacity="0.9"/>
<text x="221.6" y="71.4" text-anchor="middle" font-family="Liberation Sans" font-size="10" letter-spacing="1.5" fill="#333">0.47</text>
<path d="M248.6 406 V83.9 Q248.6 77.9 254.6 77.9 H281.2 Q287.2 77.9 287.2 83.9 V406 Z" fill="#000" opacity="0.28" filter="url(#sh)" transform="translate(2.5,1)"/>
<path d="M248.6 406 V83.9 Q248.6 77.9 254.6 77.9 H281.2 Q287.2 77.9 287.2 83.9 V406 Z" fill="url(#b4)"/>
<path d="M249.1 406 V83.9 Q249.1 78.4 254.6 78.4 H281.2 Q286.7 78.4 286.7 83.9 V406" fill="none" stroke="#0a8888" stroke-width="1" opacity="0.9"/>
<text x="268.7" y="71.4" text-anchor="middle" font-family="Liberation Sans" font-size="10" letter-spacing="1.5" fill="#333">0.47</text>
<path d="M295.8 406 V135.0 Q295.8 129.0 301.8 129.0 H328.4 Q334.4 129.0 334.4 135.0 V406 Z" fill="#000" opacity="0.28" filter="url(#sh)" transform="translate(2.5,1)"/>
<path d="M295.8 406 V135.0 Q295.8 129.0 301.8 129.0 H328.4 Q334.4 129.0 334.4 135.0 V406 Z" fill="url(#b5)"/>
<path d="M296.2 406 V135.0 Q296.2 129.5 301.8 129.5 H328.4 Q333.9 129.5 333.9 135.0 V406" fill="none" stroke="#c03838" stroke-width="1" opacity="0.9"/>
<text x="315.9" y="122.5" text-anchor="middle" font-family="Liberation Sans" font-size="10" letter-spacing="1.5" fill="#333">0.4</text>
<path d="M342.9 406 V171.5 Q342.9 165.5 348.9 165.5 H375.5 Q381.5 165.5 381.5 171.5 V406 Z" fill="#000" opacity="0.28" filter="url(#sh)" transform="translate(2.5,1)"/>
<path d="M342.9 406 V171.5 Q342.9 165.5 348.9 165.5 H375.5 Q381.5 165.5 381.5 171.5 V406 Z" fill="url(#b6)"/>
<path d="M343.4 406 V171.5 Q343.4 166.0 348.9 166.0 H375.5 Q381.0 166.0 381.0 171.5 V406" fill="none" stroke="#804090" stroke-width="1" opacity="0.9"/>
<text x="363.0" y="159.0" text-anchor="middle" font-family="Liberation Sans" font-size="10" letter-spacing="1.5" fill="#333">0.35</text>
<path d="M390.0 406 V244.5 Q390.0 238.5 396.0 238.5 H422.6 Q428.6 238.5 428.6 244.5 V406 Z" fill="#000" opacity="0.28" filter="url(#sh)" transform="translate(2.5,1)"/>
<path d="M390.0 406 V244.5 Q390.0 238.5 396.0 238.5 H422.6 Q428.6 238.5 428.6 244.5 V406 Z" fill="url(#b7)"/>
<path d="M390.5 406 V244.5 Q390.5 239.0 396.0 239.0 H422.6 Q428.1 239.0 428.1 244.5 V406" fill="none" stroke="#4a7828" stroke-width="1" opacity="0.9"/>
<text x="410.1" y="232.0" text-anchor="middle" font-family="Liberation Sans" font-size="10" letter-spacing="1.5" fill="#333">0.25</text>
<path d="M437.2 406 V266.4 Q437.2 260.4 443.2 260.4 H469.8 Q475.8 260.4 475.8 266.4 V406 Z" fill="#000" opacity="0.28" filter="url(#sh)" transform="translate(2.5,1)"/>
<path d="M437.2 406 V266.4 Q437.2 260.4 443.2 260.4 H469.8 Q475.8 260.4 475.8 266.4 V406 Z" fill="url(#b8)"/>
<path d="M437.7 406 V266.4 Q437.7 260.9 443.2 260.9 H469.8 Q475.3 260.9 475.3 266.4 V406" fill="none" stroke="#aaa000" stroke-width="1" opacity="0.9"/>
<text x="457.3" y="253.9" text-anchor="middle" font-family="Liberation Sans" font-size="10" letter-spacing="1.5" fill="#333">0.22</text>
<path d="M484.3 406 V266.4 Q484.3 260.4 490.3 260.4 H516.9 Q522.9 260.4 522.9 266.4 V406 Z" fill="#000" opacity="0.28" filter="url(#sh)" transform="translate(2.5,1)"/>
<path d="M484.3 406 V266.4 Q484.3 260.4 490.3 260.4 H516.9 Q522.9 260.4 522.9 266.4 V406 Z" fill="url(#b9)"/>
<path d="M484.8 406 V266.4 Q484.8 260.9 490.3 260.9 H516.9 Q522.4 260.9 522.4 266.4 V406" fill="none" stroke="#0880c8" stroke-width="1" opacity="0.9"/>
<text x="504.4" y="253.9" text-anchor="middle" font-family="Liberation Sans" font-size="10" letter-spacing="1.5" fill="#333">0.22</text>
<path d="M531.5 406 V259.1 Q531.5 253.1 537.5 253.1 H564.1 Q570.1 253.1 570.1 259.1 V406 Z" fill="#000" opacity="0.28" filter="url(#sh)" transform="translate(2.5,1)"/>
<path d="M531.5 406 V259.1 Q531.5 253.1 537.5 253.1 H564.1 Q570.1 253.1 570.1 259.1 V406 Z" fill="url(#b10)"/>
<path d="M532.0 406 V259.1 Q532.0 253.6 537.5 253.6 H564.1 Q569.6 253.6 569.6 259.1 V406" fill="none" stroke="#880c1a" stroke-width="1" opacity="0.9"/>
<text x="551.6" y="246.6" text-anchor="middle" font-family="Liberation Sans" font-size="10" letter-spacing="1.5" fill="#333">0.23</text>
<path d="M578.6 406 V251.8 Q578.6 245.8 584.6 245.8 H611.2 Q617.2 245.8 617.2 251.8 V406 Z" fill="#000" opacity="0.28" filter="url(#sh)" transform="translate(2.5,1)"/>
<path d="M578.6 406 V251.8 Q578.6 245.8 584.6 245.8 H611.2 Q617.2 245.8 617.2 251.8 V406 Z" fill="url(#b11)"/>
<path d="M579.1 406 V251.8 Q579.1 246.3 584.6 246.3 H611.2 Q616.8 246.3 616.8 251.8 V406" fill="none" stroke="#8a78b8" stroke-width="1" opacity="0.9"/>
<text x="598.7" y="239.3" text-anchor="middle" font-family="Liberation Sans" font-size="10" letter-spacing="1.5" fill="#333">0.24</text>
<path d="M625.8 406 V244.5 Q625.8 238.5 631.8 238.5 H658.4 Q664.4 238.5 664.4 244.5 V406 Z" fill="#000" opacity="0.28" filter="url(#sh)" transform="translate(2.5,1)"/>
<path d="M625.8 406 V244.5 Q625.8 238.5 631.8 238.5 H658.4 Q664.4 238.5 664.4 244.5 V406 Z" fill="url(#b12)"/>
<path d="M626.3 406 V244.5 Q626.3 239.0 631.8 239.0 H658.4 Q663.9 239.0 663.9 244.5 V406" fill="none" stroke="#c45800" stroke-width="1" opacity="0.9"/>
<text x="645.9" y="232.0" text-anchor="middle" font-family="Liberation Sans" font-size="10" letter-spacing="1.5" fill="#333">0.25</text>
<path d="M672.9 406 V229.9 Q672.9 223.9 678.9 223.9 H705.5 Q711.5 223.9 711.5 229.9 V406 Z" fill="#000" opacity="0.28" filter="url(#sh)" transform="translate(2.5,1)"/>
<path d="M672.9 406 V229.9 Q672.9 223.9 678.9 223.9 H705.5 Q711.5 223.9 711.5 229.9 V406 Z" fill="url(#b13)"/>
<path d="M673.4 406 V229.9 Q673.4 224.4 678.9 224.4 H705.5 Q711.0 224.4 711.0 229.9 V406" fill="none" stroke="#d8b890" stroke-width="1" opacity="0.9"/>
<text x="693.0" y="217.4" text-anchor="middle" font-family="Liberation Sans" font-size="10" letter-spacing="1.5" fill="#333">0.27</text>
<path d="M720.1 406 V208.0 Q720.1 202.0 726.1 202.0 H752.7 Q758.7 202.0 758.7 208.0 V406 Z" fill="#000" opacity="0.28" filter="url(#sh)" transform="translate(2.5,1)"/>
<path d="M720.1 406 V208.0 Q720.1 202.0 726.1 202.0 H752.7 Q758.7 202.0 758.7 208.0 V406 Z" fill="url(#b14)"/>
<path d="M720.6 406 V208.0 Q720.6 202.5 726.1 202.5 H752.7 Q758.2 202.5 758.2 208.0 V406" fill="none" stroke="#a09800" stroke-width="1" opacity="0.9"/>
<text x="740.2" y="195.5" text-anchor="middle" font-family="Liberation Sans" font-size="10" letter-spacing="1.5" fill="#333">0.3</text>
</svg>
<div class="a" style="left:0;top:0;width:956px;height:420px;overflow:hidden;font-size:14px;font-weight:bold;color:#444;white-space:nowrap">
<div class="a" style="left:576px;top:397px">电能</div>
<div class="a" style="left:611px;top:397px">-</div>
<div class="a" style="left:623px;top:397px;letter-spacing:0.5px">单耗数</div>
<div class="a" style="left:670px;top:397px">（日期:</div>
<div class="a" style="left:720px;top:397px;letter-spacing:2px;font-weight:normal;-webkit-text-stroke:0.3px #444">2015-12-16</div>
<div class="a" style="left:812px;top:397px">）（单位：</div>
<div class="a" style="left:889px;top:397px;letter-spacing:1.6px;font-weight:normal;-webkit-text-stroke:0.3px #444">Kw·h/m³</div>
</div>
<!-- scrollbars -->
<style>
.sbtn{border-radius:2px;background:linear-gradient(90deg,#c8d6fb,#b9cbf6);border:1px solid #eef3fe;box-shadow:0 0 0 0.5px #b7c7ec}
.sthv{border-radius:2px;background:linear-gradient(90deg,#c6d6fc 0%,#bccffa 50%,#b0c6f6 100%);border:1px solid #e8effd}
.sthh{border-radius:2px;background:linear-gradient(180deg,#c6d6fc 0%,#bccffa 50%,#b0c6f6 100%);border:1px solid #e8effd}
</style>
<!-- inner vertical -->
<div class="a" style="left:956px;top:380px;width:15px;height:396px;background:#fbfbf5;border-left:1px solid #eeeee4"></div>
<div class="a sbtn" style="left:958px;top:381px;width:12px;height:14px"></div>
<svg class="a" style="left:959px;top:384px" width="11" height="8" viewBox="0 0 11 8"><path d="M2 6 L5.5 2.5 L9 6" stroke="#4d6185" stroke-width="2" fill="none"/></svg>
<div class="a sthv" style="left:958px;top:397px;width:12px;height:380px"></div>
<svg class="a" style="left:961px;top:585px" width="7" height="8" viewBox="0 0 7 8"><path d="M0 0.5H7M0 2.5H7M0 4.5H7M0 6.5H7" stroke="#eef3ff" stroke-width="1"/><path d="M0 1.5H7M0 3.5H7M0 5.5H7M0 7.5H7" stroke="#8ca6de" stroke-width="1"/></svg>
<!-- outer vertical -->
<div class="a" style="left:970px;top:89px;width:10px;height:687px;background:#fbfbf5;border-left:1px solid #eeeee4"></div>
<div class="a sbtn" style="left:972px;top:90px;width:12px;height:14px"></div>
<svg class="a" style="left:973px;top:93px" width="11" height="8" viewBox="0 0 11 8"><path d="M2 6 L5.5 2.5 L9 6" stroke="#4d6185" stroke-width="2" fill="none"/></svg>
<div class="a sthv" style="left:972px;top:106px;width:12px;height:578px"></div>
<svg class="a" style="left:975px;top:30px" width="7" height="8" viewBox="0 0 7 8"></svg>
<div class="a sbtn" style="left:972px;top:760px;width:12px;height:15px"></div>
<svg class="a" style="left:973px;top:764px" width="11" height="8" viewBox="0 0 11 8"><path d="M2 2 L5.5 5.5 L9 2" stroke="#4d6185" stroke-width="2" fill="none"/></svg>
<!-- horizontal -->
<div class="a" style="left:155px;top:776px;width:815px;height:17px;background:#fbfbf5;border-top:1px solid #eeeee4"></div>
<div class="a sbtn" style="left:156px;top:777px;width:15px;height:15px;background:linear-gradient(180deg,#c8d6fb,#b9cbf6)"></div>
<svg class="a" style="left:159px;top:779px" width="8" height="11" viewBox="0 0 8 11"><path d="M6 2 L2.5 5.5 L6 9" stroke="#4d6185" stroke-width="2" fill="none"/></svg>
<div class="a sthh" style="left:173px;top:777px;width:772px;height:15px"></div>
<svg class="a" style="left:554px;top:781px" width="8" height="7" viewBox="0 0 8 7"><path d="M0.5 0V7M2.5 0V7M4.5 0V7M6.5 0V7" stroke="#eef3ff" stroke-width="1"/><path d="M1.5 0V7M3.5 0V7M5.5 0V7M7.5 0V7" stroke="#8ca6de" stroke-width="1"/></svg>
<div class="a sbtn" style="left:954px;top:777px;width:15px;height:15px;background:linear-gradient(180deg,#c8d6fb,#b9cbf6)"></div>
<svg class="a" style="left:957px;top:779px" width="8" height="11" viewBox="0 0 8 11"><path d="M2 2 L5.5 5.5 L2 9" stroke="#4d6185" stroke-width="2" fill="none"/></svg>
<div class="a" style="left:970px;top:776px;width:10px;height:17px;background:#ece9d8"></div>
<!-- footer -->
<div class="a" style="left:2px;top:799px;width:978px;height:26px;background:#c3dbf2;border-top:1px solid #b6d2ef"></div>
<svg class="a" style="left:2px;top:800px" width="978" height="25" viewBox="0 0 978 25"><path d="M0 0 H978 V2 Q620 6 0 24 Z" fill="#fff" opacity="0.2"/></svg>
<div class="a" style="left:2px;top:825px;width:978px;height:2px;background:#f6f6f0"></div>
<svg class="a" style="left:960px;top:795px" width="20" height="32" viewBox="960 795 20 32"><circle cx="1006" cy="829" r="35.5" fill="#8aa0b8"/><circle cx="1006" cy="829" r="34.5" fill="#fafafa"/><circle cx="1006" cy="829" r="32.5" fill="#c0561a"/><circle cx="1006" cy="829" r="31.5" fill="#f28a2e"/><path d="M978 827 Q977 820 982 818" stroke="#fff" stroke-width="3" fill="none"/></svg>
<div class="a" style="left:28px;top:808px;font-size:12px;color:#ff0000">版本：<span style="font-family:'Liberation Mono',monospace;font-size:11px">V1.4</span></div>
</body></html>
